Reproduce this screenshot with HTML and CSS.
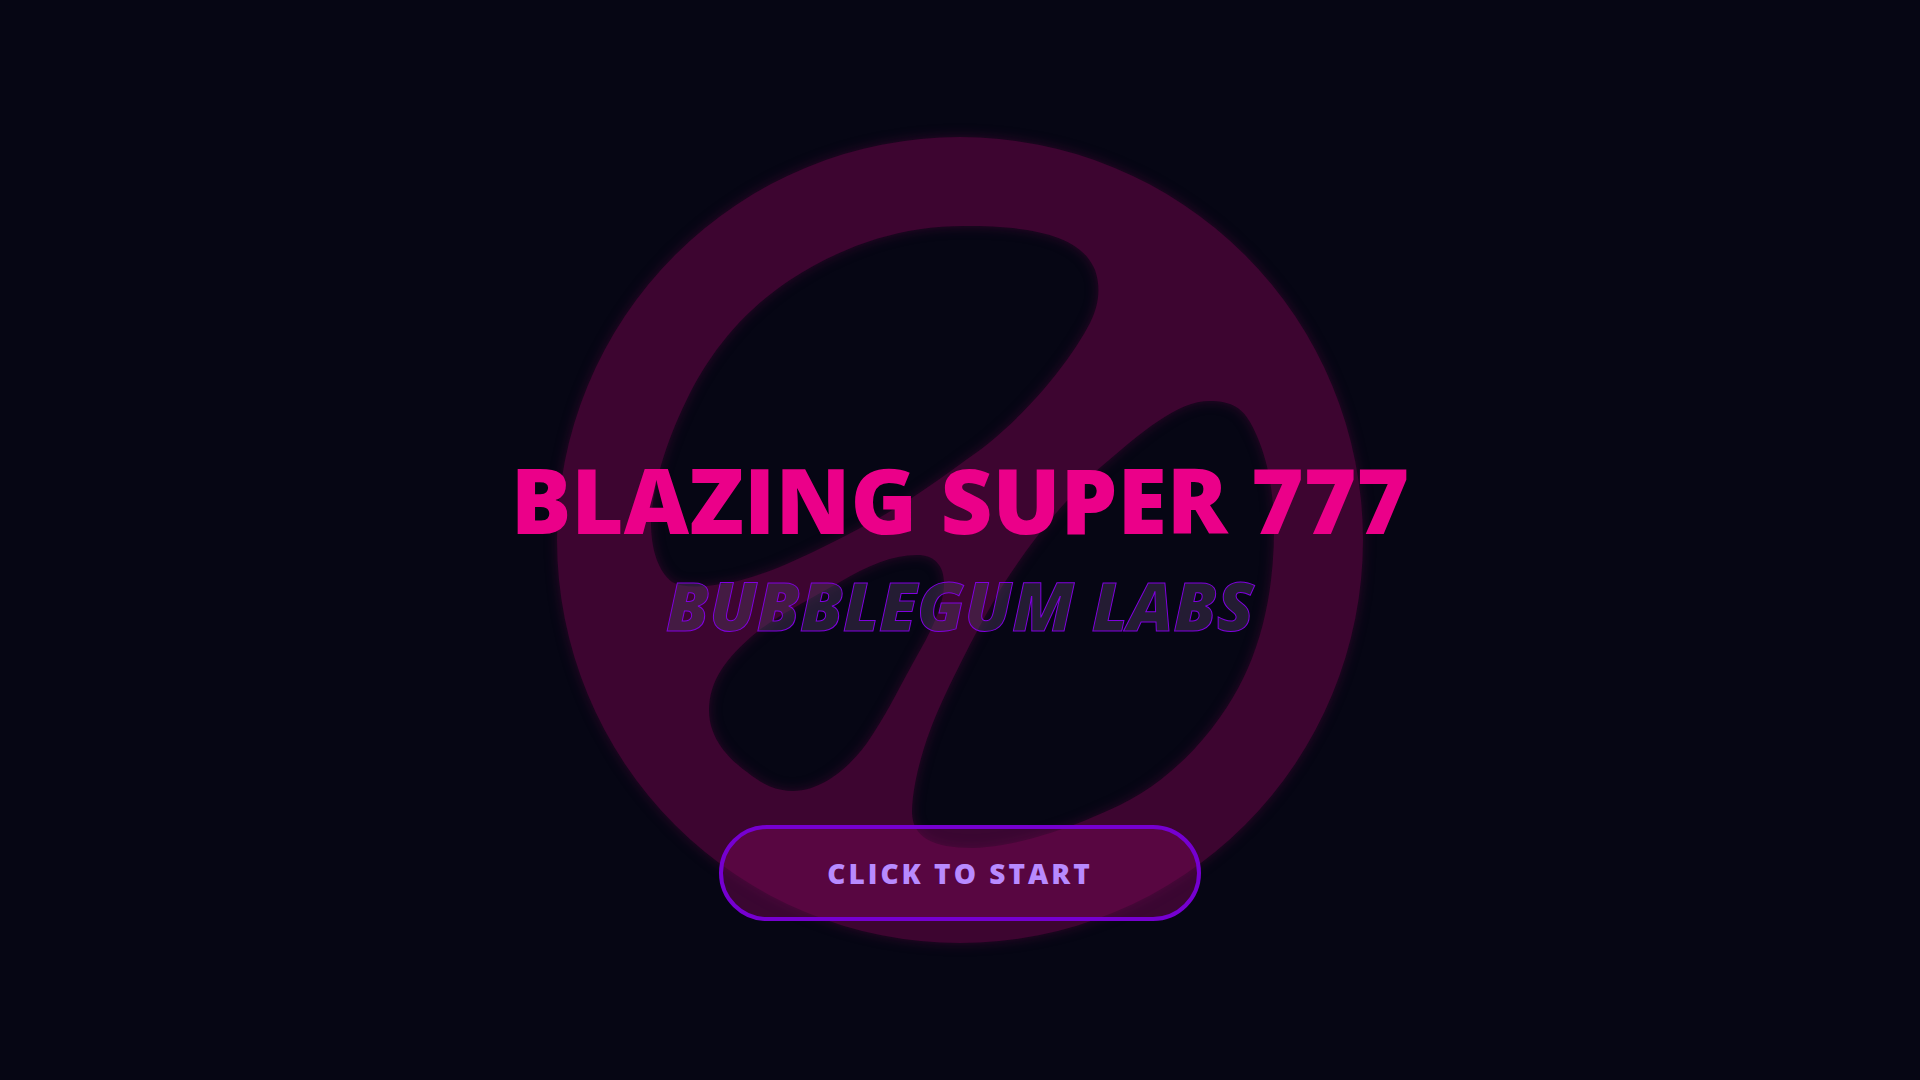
FILE: index.html
```
<!DOCTYPE html>
<html lang="en">
  <head>
    <meta charset="UTF-8" />
    <meta name="viewport" content="width=device-width, initial-scale=1.0" />
    <title>Blazing Super 777</title>
    <link rel="stylesheet" href="styles.css">
  </head>
  <body>
    <main class="splash">
      <svg class="logo" viewBox="-2 -2 810 810" aria-hidden="true">
        <!-- disc with three holes -->
        <path fill-rule="evenodd" d="M403 0A403 403 0 1 1 403 806A403 403 0 1 1 403 0Z
          M413 89C345 88 287 108 233 143C185 175 155 214 133 256C112 298 97 340 94 385C94 412 101 434 115 445C128 452 150 450 176 445C215 437 265 411 305 390C350 367 385 340 423 313C480 269 518 215 533 186C542 168 544 150 538 133C528 108 500 98 470 93C450 90 435 89 413 89Z
          M653 264C620 264 586 294 538 335C496 375 466 417 446 448C420 492 395 542 380 576C365 611 355 650 355 676C356 700 375 711 416 711C450 710 500 698 563 668C602 649 641 615 670 570C702 522 717 460 717 393C717 345 707 310 693 285C684 269 671 264 653 264Z
          M360 418C335 418 310 429 283 445C255 461 220 479 200 495C168 521 152 545 152 573C152 602 172 622 190 635C206 648 220 654 236 654C258 654 286 639 310 606C328 580 340 555 356 526C374 495 387 469 387 446C387 428 377 418 360 418Z" />
      </svg>
      <div class="content">
        <h1 class="title">BLAZING SUPER 777</h1>
        <p class="studio">BUBBLEGUM LABS</p>
        <button class="start" type="button">CLICK TO START</button>
      </div>
    </main>
  </body>
</html>
```
FILE: styles.css
```
body {
  margin: 0;
  background: #060614;
  font-family: "Segoe UI Black", "Open Sans", sans-serif;
}
.splash {
  display: grid;
  place-items: center;
  min-height: 100vh;
}
.logo,
.content {
  grid-area: 1 / 1;
}
.logo {
  height: 75vh;
  max-width: 90vw;
  overflow: visible;
  fill: #3d0530;
  filter: drop-shadow(0 0 6px rgba(61, 5, 48, 0.7));
}
.content {
  display: flex;
  flex-direction: column;
  align-items: center;
  padding-top: 280px;
  text-align: center;
  z-index: 1;
}
.title,
.studio {
  margin: 0;
  font-weight: 900;
}
.title {
  color: #eb0089;
  font-size: 90px;
  line-height: 120px;
}
.studio {
  color: rgba(78, 60, 96, 0.42);
  font-size: 68px;
  font-style: italic;
  line-height: 92px;
  -webkit-text-stroke: 1px #8000e0;
}
.start {
  margin-top: 174px;
  padding: 0 104px;
  border: 4px solid #7600d1;
  border-radius: 48px;
  background: rgba(120, 8, 84, 0.46);
  color: #b88aff;
  font-family: inherit;
  font-size: 28px;
  font-weight: 900;
  letter-spacing: 3px;
  line-height: 88px;
  cursor: pointer;
}
```
